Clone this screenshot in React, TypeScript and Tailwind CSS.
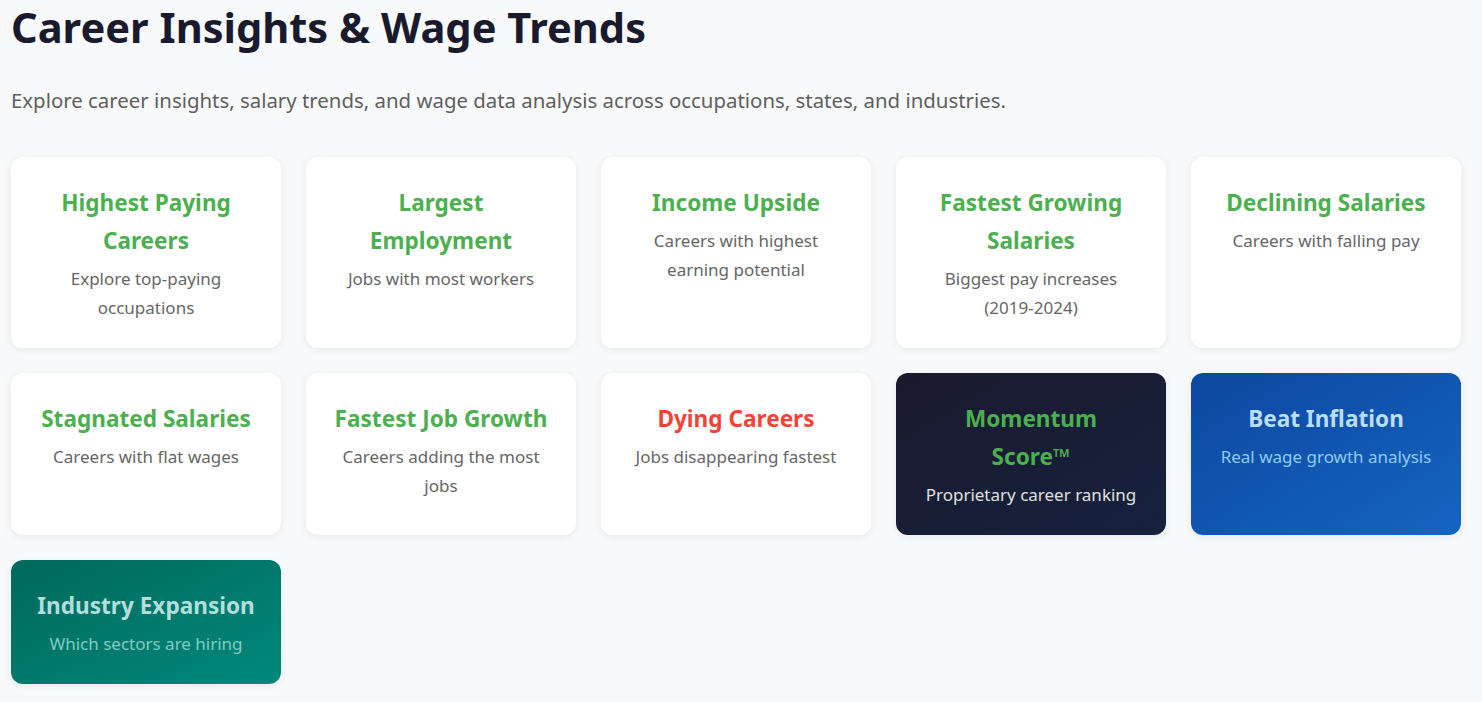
type Card = {
  title: string;
  desc: string;
  tone?: "light" | "danger" | "dark" | "blue" | "teal";
  narrow?: boolean;
};

const cards: Card[] = [
  { title: "Highest Paying Careers", desc: "Explore top-paying occupations" },
  { title: "Largest Employment", desc: "Jobs with most workers" },
  { title: "Income Upside", desc: "Careers with highest earning potential" },
  { title: "Fastest Growing Salaries", desc: "Biggest pay increases (2019-2024)" },
  { title: "Declining Salaries", desc: "Careers with falling pay" },
  { title: "Stagnated Salaries", desc: "Careers with flat wages" },
  { title: "Fastest Job Growth", desc: "Careers adding the most jobs" },
  { title: "Dying Careers", desc: "Jobs disappearing fastest", tone: "danger" },
  { title: "Momentum Score™", desc: "Proprietary career ranking", tone: "dark", narrow: true },
  { title: "Beat Inflation", desc: "Real wage growth analysis", tone: "blue" },
  { title: "Industry Expansion", desc: "Which sectors are hiring", tone: "teal" },
];

const boxTone = {
  light: "bg-white",
  danger: "bg-white",
  dark: "bg-gradient-to-br from-[#1a1a2e] to-[#16213e]",
  blue: "bg-gradient-to-br from-[#0d47a1] to-[#1565c0]",
  teal: "bg-gradient-to-br from-[#00695c] to-[#00897b]",
};

const titleTone = {
  light: "text-[#4caf50]",
  danger: "text-[#f44336]",
  dark: "text-[#4caf50]",
  blue: "text-[#bbdefb]",
  teal: "text-[#b2dfdb]",
};

const descTone = {
  light: "text-[#666666]",
  danger: "text-[#666666]",
  dark: "text-[#e0e0e0]",
  blue: "text-[#90caf9]",
  teal: "text-[#80cbc4]",
};

function InsightCard({ title, desc, tone = "light", narrow }: Card) {
  return (
    <a
      href="#"
      className={`block rounded-xl px-6 pt-[27px] pb-[26px] text-center shadow-[0_2px_8px_rgba(0,0,0,0.07)] ${boxTone[tone]}`}
    >
      <h3
        className={`mb-1 text-[22.6px] font-bold leading-[38px] ${narrow ? "mx-auto max-w-[190px]" : ""} ${titleTone[tone]}`}
      >
        {title}
      </h3>
      <p className={`text-[17px] leading-[29px] ${descTone[tone]}`}>{desc}</p>
    </a>
  );
}

export default function App() {
  return (
    <div className="min-h-screen bg-[#f8f9fa] px-[11px] font-['Noto_Sans',sans-serif]">
      <h1 className="text-[41.6px] font-bold leading-[54px] text-[#1a1a2e]">Career Insights &amp; Wage Trends</h1>
      <p className="mt-[30px] text-[20.4px] leading-[32px] text-[#5f5f5f]">
        Explore career insights, salary trends, and wage data analysis across occupations, states, and industries.
      </p>
      <div className="mt-[41px] grid w-[1450px] grid-cols-5 gap-[25px]">
        {cards.map((c) => (
          <InsightCard key={c.title} {...c} />
        ))}
      </div>
    </div>
  );
}
